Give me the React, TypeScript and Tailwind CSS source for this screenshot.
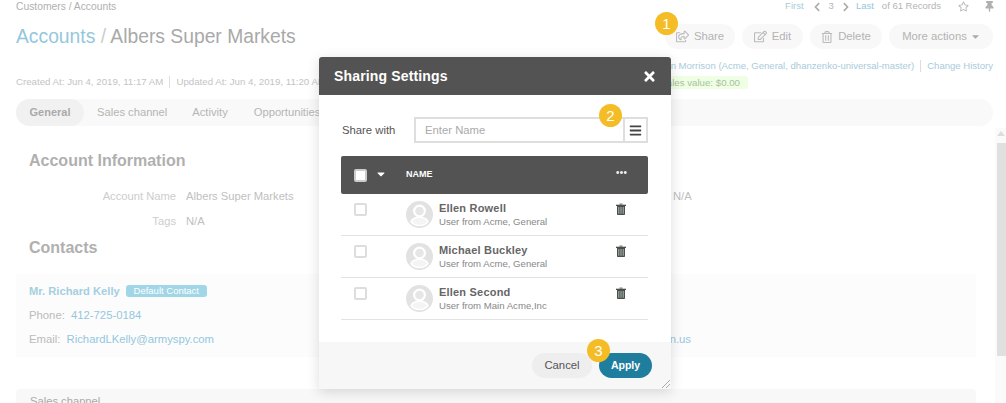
import { FaRegShareSquare, FaRegEdit, FaRegTrashAlt, FaTimes, FaBars, FaRegStar, FaThumbtack, FaChevronLeft, FaChevronRight, FaCaretDown, FaEllipsisH } from 'react-icons/fa'

const users = [
  { name: 'Ellen Rowell', org: 'User from Acme, General' },
  { name: 'Michael Buckley', org: 'User from Acme, General' },
  { name: 'Ellen Second', org: 'User from Main Acme,Inc' },
]

function Step({ n, className }: { n: number; className: string }) {
  return (
    <div className={`absolute w-[23px] h-[23px] rounded-full bg-[#f4bc25] text-white text-[15px] leading-[23px] text-center ${className}`}>
      {n}
    </div>
  )
}

function Avatar() {
  return (
    <svg width="27" height="27" viewBox="0 0 27 27" className="shrink-0">
      <circle cx="13.5" cy="13.5" r="13.5" fill="#e2e2e2" />
      <circle cx="13.5" cy="10" r="5.4" fill="#e6e6e6" stroke="#fff" strokeWidth="2.2" />
      <path d="M5 20.500c1.500-3 4-4.200 8.500-4.200s7 1.200 8.500 4.200c-2 2.700-5 4-8.500 4s-6.500-1.300-8.500-4z" fill="#f4f4f4" stroke="#fff" strokeWidth="1.500" />
    </svg>
  )
}

function TrashIcon() {
  return (
    <svg width="10" height="12" viewBox="0 0 10 12" className="-mt-[11px] shrink-0">
      <path d="M3.500 .5h3v1.200h-3z" fill="#77807c" />
      <path d="M0 1.700h10v1.300H0z" fill="#4a4f4c" />
      <path d="M1 3h8v8.200c0 .5-.3.8-.8.800H1.800c-.5 0-.8-.3-.8-.8z" fill="#4a4f4c" />
      <path d="M2.800 4v6.800M5 4v6.800M7.200 4v6.800" stroke="#b9c6bd" strokeWidth="0.900" />
    </svg>
  )
}

function ActionButton({ icon, label, className }: { icon?: React.ReactNode; label: string; className: string }) {
  return (
    <div className={`h-[25px] rounded-full bg-[#f8f8f8] text-[#b3b3b3] text-[11.300px] flex items-center justify-center gap-[5px] ${className}`}>
      {icon}
      <span>{label}</span>
    </div>
  )
}

function Page() {
  return (
    <div className="flex flex-col h-[403px] overflow-hidden relative">
      <div className="flex justify-between pl-4 pr-[13px]">
        <div>
          <div className="text-[10.300px] leading-[13px] text-[#b0b0b0]">Customers / Accounts</div>
          <div className="mt-[12px] text-[19.300px] leading-[24px] text-[#a9a9a9]">
            <span className="text-[#95c7dc]">Accounts</span> <span className="text-[#ccc]">/</span> Albers Super Markets
          </div>
        </div>
        <div className="flex flex-col items-end">
          <div className="h-[13px] flex items-center text-[9.500px] text-[#b3b3b3]">
            <span className="text-[#a8cbdb]">First</span>
            <FaChevronLeft className="ml-[8px] text-[10px] text-[#aaa]" />
            <span className="ml-[7px]">3</span>
            <FaChevronRight className="ml-[7px] text-[10px] text-[#aaa]" />
            <span className="ml-[5px] text-[#95c7dc]">Last</span>
            <span className="ml-[8px]">of 61 Records</span>
            <FaRegStar className="ml-[17px] text-[11px] text-[#b8b8b8]" />
            <FaThumbtack className="ml-[15px] mr-[-2px] text-[11px] text-[#b0b0b0]" />
          </div>
          <div className="flex mt-[11px] gap-[7px]">
            <ActionButton className="w-[70px]" icon={<FaRegShareSquare className="text-[13px] text-[#bbb]" />} label="Share" />
            <ActionButton className="w-[61px]" icon={<FaRegEdit className="text-[13px] text-[#bbb]" />} label="Edit" />
            <ActionButton className="w-[72px]" icon={<FaRegTrashAlt className="text-[12px] text-[#bbb]" />} label="Delete" />
            <ActionButton className="w-[104px] pr-[13px]" label="More actions" icon={null} />
          </div>
        </div>
      </div>

      <div className="flex justify-between items-end pl-4 pr-[13px] mt-[11px] text-[9.700px] leading-[12px] text-[#c4c4c4] h-[29px] shrink-0">
        <div className="flex pb-[1px]">
          <span>Created At: Jun 4, 2019, 11:17 AM</span>
          <span className="ml-[6px] pl-[6px] border-l border-[#ddd]">Updated At: Jun 4, 2019, 11:20 AM</span>
        </div>
        <div className="flex flex-col items-end">
          <div className="flex text-[#a8cbdb] text-[9.550px]">
            <span>Owner: John Morrison (Acme, General, dhanzenko-universal-master)</span>
            <span className="ml-[6px] pl-[6px] border-l border-[#ddd]">Change History</span>
          </div>
          <div className="mt-[4px] mr-[245px] w-[88px] h-[13px] pr-[8px] text-right whitespace-nowrap bg-[#efffe3] rounded-[3px] text-[9.700px] leading-[13px] text-[#a9c0a0]">
            Sales value: $0.00
          </div>
        </div>
      </div>

      <div className="mx-4 mt-[10px] w-[977px] h-[27px] rounded-full bg-[#f9f9f9] flex items-center text-[11.200px] text-[#b5b5b5] shrink-0">
        <div className="w-[68px] h-[27px] rounded-full bg-[#f1f1f1] flex items-center justify-center font-bold text-[11px] text-[#aaa]">General</div>
        <span className="ml-[13px]">Sales channel</span>
        <span className="ml-[25px]">Activity</span>
        <span className="ml-[26px]">Opportunities</span>
      </div>

      <div className="pl-[29px] pt-[25px]">
        <h2 className="text-[16px] leading-[20px] font-bold text-[#b0b0b0]">Account Information</h2>
        <div className="mt-[18px] text-[11.200px] leading-[14px] text-[#c0c0c0] flex">
          <span className="w-[147px] text-right text-[#cdcdcd]">Account Name</span>
          <span className="ml-[10px] w-[487px]">Albers Super Markets</span>
          <span>N/A</span>
        </div>
        <div className="mt-[11px] text-[11.200px] leading-[14px] text-[#c0c0c0] flex">
          <span className="w-[147px] text-right text-[#cdcdcd]">Tags</span>
          <span className="ml-[10px]">N/A</span>
        </div>
        <h2 className="mt-[10px] text-[16px] leading-[20px] font-bold text-[#b0b0b0]">Contacts</h2>
      </div>

      <div className="mx-4 mt-[16px] w-[960px] h-[83px] bg-[#fcfcfc] pl-[13px] pt-[10px] text-[11.300px] shrink-0">
        <div className="flex items-center h-[14px]">
          <span className="font-bold text-[11.200px] text-[#a5cfe0]">Mr. Richard Kelly</span>
          <span className="ml-[6px] h-[12px] w-[81px] text-center rounded-[3px] bg-[#a0d6e6] text-white text-[9.500px] leading-[12px]">Default Contact</span>
        </div>
        <div className="mt-[9px] h-[15px] text-[#bbb]">
          Phone: <span className="ml-[3px] text-[#95c7dc]">412-725-0184</span>
        </div>
        <div className="mt-[9px] h-[15px] text-[#bbb] flex justify-between pr-[285px]">
          <span>Email: <span className="ml-[3px] text-[#95c7dc]">RichardLKelly@armyspy.com</span></span>
          <span className="text-[#95c7dc]">n.us</span>
        </div>
      </div>

      <div className="mx-4 mt-[32px] w-[960px] h-[30px] rounded-t-[4px] bg-[#f8f8f8] pl-[14px] pt-[5px] text-[11.200px] leading-[14px] text-[#aaa] shrink-0">
        Sales channel
      </div>

      {/* caret on more actions */}
      <FaCaretDown className="absolute left-[970px] top-[31px] text-[11px] text-[#aaa]" />
      {/* scrollbar */}
      <div className="absolute right-0 top-[128px] bottom-0 w-[11px] bg-[#fafafa]">
        <div className="mt-[3px] mx-auto w-0 h-0 border-x-[4px] border-x-transparent border-b-[5px] border-b-[#ddd]" />
        <div className="mt-[7px] ml-[2px] h-[213px] bg-[#e0e0e0]" />
      </div>
    </div>
  )
}

function SharingDialog() {
  return (
    <div className="absolute left-[319px] top-[57px] w-[352px] h-[332px] bg-white flex flex-col shadow-[0_3px_12px_rgba(0,0,0,0.14)]">
      <div className="h-[38px] bg-[#545354] rounded-t-[3px] flex items-center justify-between pl-[15px] pr-[14px] text-white">
        <span className="text-[14px] font-bold tracking-[0.15px]">Sharing Settings</span>
        <FaTimes className="text-[15px]" />
      </div>

      <div className="flex-1 pl-[22px] pr-[23px]">
        <div className="flex items-center mt-[22px] h-[26px]">
          <span className="w-[73px] pl-[1px] text-[11.300px] text-[#555]">Share with</span>
          <div className="w-[211px] h-[26px] border-2 border-[#dedede] pl-[9px] text-[11.300px] leading-[22px] text-[#aaa]">Enter Name</div>
          <div className="w-[23px] h-[26px] border-2 border-l-0 border-[#dedede] flex items-center justify-center">
            <FaBars className="text-[13px] text-[#444]" />
          </div>
        </div>

        <div className="mt-[13px] h-[38px] bg-[#545354] rounded-[2px] flex items-center text-white">
          <div className="ml-[13px] w-[13px] h-[13px] rounded-[2px] bg-white border-2 border-[#ccc]" />
          <FaCaretDown className="ml-[8px] text-[12px] -mt-[3px]" />
          <span className="ml-[19px] text-[9px] font-bold w-[210px]">NAME</span>
          <FaEllipsisH className="text-[11px] text-[#e5e5e5] -mt-[6px]" />
        </div>

        {users.map((u) => (
          <div key={u.name} className="h-[42px] border-b border-[#e3e3e3] flex items-center">
            <div className="ml-[13px] w-[13px] h-[13px] rounded-[2px] border-2 border-[#ddd] -mt-[10px]" />
            <div className="ml-[39px]"><Avatar /></div>
            <div className="ml-[6px] w-[177px]">
              <div className="text-[11px] leading-[13px] font-bold text-[#666] tracking-[0.2px]">{u.name}</div>
              <div className="text-[9.600px] leading-[13px] text-[#888]">{u.org}</div>
            </div>
            <TrashIcon />
          </div>
        ))}
      </div>

      <div className="h-[47px] bg-[#f7f7f7] flex items-center justify-end pr-[19px] gap-[7px] relative">
        <div className="w-[60px] h-[25px] rounded-full bg-[#eeeeee] text-[11.300px] text-[#555] flex items-center justify-center">Cancel</div>
        <div className="w-[53px] h-[25px] rounded-full bg-[#1f7d9e] text-[10.500px] font-bold text-white flex items-center justify-center">Apply</div>
        <svg width="10" height="10" viewBox="0 0 10 10" className="absolute right-0 bottom-0">
          <path d="M1 9L9 1M5 9L9 5" stroke="#aaa" strokeWidth="1" />
        </svg>
      </div>
    </div>
  )
}

export default function App() {
  return (
    <div className="relative w-[1006px] h-[403px] overflow-hidden bg-white font-['Liberation_Sans',Arial,sans-serif]">
      <Page />
      <SharingDialog />
      <Step n={1} className="left-[655px] top-[12px]" />
      <Step n={2} className="left-[599px] top-[104px]" />
      <Step n={3} className="left-[587px] top-[339px]" />
    </div>
  )
}
